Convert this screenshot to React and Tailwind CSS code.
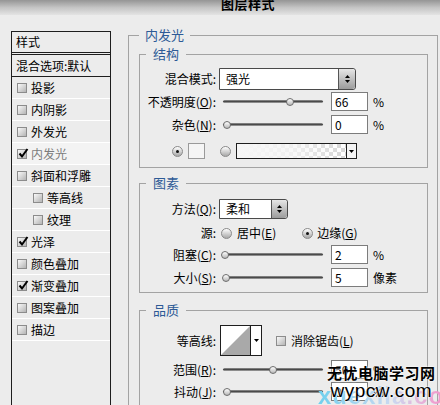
import React from 'react';

const effects = [
  { label: '投影' },
  { label: '内阴影' },
  { label: '外发光' },
  { label: '内发光', checked: true, active: true },
  { label: '斜面和浮雕' },
  { label: '等高线', indent: true },
  { label: '纹理', indent: true },
  { label: '光泽', checked: true },
  { label: '颜色叠加' },
  { label: '渐变叠加', checked: true },
  { label: '图案叠加' },
  { label: '描边' },
];

const Checkbox = ({ checked }) => (
  <div className="relative w-[10px] h-[10px] shrink-0 border border-[#8c8c8c] bg-gradient-to-br from-[#fafafa] to-[#b4b4b4]">
    {checked && (
      <svg className="absolute -top-[2px] left-0" width="11" height="11" viewBox="0 0 11 11">
        <path d="M1.5 5.5 L4 8.5 L9.5 1" fill="none" stroke="#000" strokeWidth="2" />
      </svg>
    )}
  </div>
);

const Radio = ({ checked }) => (
  <div className="w-[11px] h-[11px] shrink-0 rounded-full border border-[#8a8a8a] bg-gradient-to-b from-[#ffffff] to-[#a8a8a8] flex items-center justify-center">
    {checked && <div className="w-[3px] h-[3px] rounded-full bg-[#111]" />}
  </div>
);

const Slider = ({ value }) => (
  <div className="relative w-[100px] h-[8px] flex items-center shrink-0">
    <div className="w-full h-[3px] rounded-full bg-gradient-to-b from-[#9a9a9a] via-[#4a4a4a] to-[#b0b0b0]" />
    <div
      className="absolute top-0 w-[8px] h-[8px] rounded-full border border-[#6e6e6e] bg-gradient-to-b from-[#ffffff] to-[#b8b8b8]"
      style={{ left: `${value}%`, marginLeft: value === 0 ? 0 : -4 }}
    />
  </div>
);

const NumBox = ({ value }) => (
  <div className="w-[37px] h-[19px] shrink-0 border border-[#7c7c7c] bg-white pl-[3px] flex items-center text-[12px] leading-none">
    {value}
  </div>
);

const Stepper = ({ w = 17 }) => (
  <div className={`h-full ${w === 17 ? 'w-[17px]' : 'w-[16px]'} border-l border-[#555] rounded-r-[3px] bg-gradient-to-b from-[#e6e6e6] to-[#9c9c9c] flex flex-col items-center justify-center gap-[2px]`}>
    <svg width="5" height="3" viewBox="0 0 5 3"><path d="M0 3 L2.5 0 L5 3 Z" fill="#000" /></svg>
    <svg width="5" height="3" viewBox="0 0 5 3"><path d="M0 0 L2.5 3 L5 0 Z" fill="#000" /></svg>
  </div>
);

const Label = ({ children }) => (
  <div className="w-[71px] shrink-0 text-right pr-[1px] text-[12px] leading-none whitespace-nowrap">{children}</div>
);

const Group = ({ title, className, children }) => (
  <fieldset className={`border border-[#a3a3a3] pl-[6px] ${className}`}>
    <legend className="px-[7px] text-[13px] leading-[16px] text-[#2d5a96]">{title}</legend>
    {children}
  </fieldset>
);

const SliderRow = ({ label, value, num, unit = '%', className = '' }) => (
  <div className={`flex items-center h-[19px] ${className}`}>
    <Label>{label}</Label>
    <div className="ml-[6px]"><Slider value={value} /></div>
    <div className="ml-[8px]"><NumBox value={num} /></div>
    <span className="ml-[5px] text-[12px] leading-none">{unit}</span>
  </div>
);

export default function App() {
  return (
    <div className="relative w-[440px] h-[405px] overflow-hidden bg-[#ececec] text-black font-['Noto_Sans_CJK_SC','Liberation_Sans',sans-serif]">
      {/* title bar */}
      <div className="h-[15px] overflow-hidden bg-gradient-to-b from-[#959595] via-[#c4c4c4] to-[#e4e4e4] flex justify-center">
        <div className="ml-[56px] -mt-[3px] text-[13px] leading-none font-bold tracking-[0.5px]">图层样式</div>
      </div>

      <div className="flex items-start">
        {/* left list */}
        <div className="ml-[11px] mt-[16px] w-[100px] h-[420px] border border-[#1e1e1e] shrink-0">
          <div className="h-[23px] pl-[4px] pt-[3px] border-b-[3px] border-double border-[#1e1e1e] text-[12px] leading-[14px]">样式</div>
          <div className="h-[22px] pl-[4px] flex items-center border-b border-[#1e1e1e] text-[12px] leading-none whitespace-nowrap">混合选项:默认</div>
          {effects.map((e) => (
            <div
              key={e.label}
              className={`h-[22px] flex items-center border-b border-white text-[12px] leading-none ${e.indent ? 'pl-[21px]' : 'pl-[5px]'} ${e.active ? 'bg-[#f3f3f3] text-[#7c7c7c]' : ''}`}
            >
              <Checkbox checked={e.checked} />
              <span className="ml-[4px]">{e.label}</span>
            </div>
          ))}
        </div>

        {/* right panel */}
        <fieldset className="ml-[17px] mt-[12px] w-[310px] h-[420px] border border-[#a3a3a3] pl-[10px]">
          <legend className="px-[6px] text-[13px] leading-[16px] text-[#2d5a96]">内发光</legend>

          <Group title="结构" className="mt-[3px] w-[289px] pt-[6px] pb-[8px]">
            <div className="flex items-center h-[22px]">
              <Label>混合模式:</Label>
              <div className="ml-[2px] w-[137px] h-[22px] border border-[#4a4a4a] rounded-r-[3px] bg-white flex items-center">
                <span className="flex-1 pl-[6px] text-[12px] leading-none">强光</span>
                <Stepper />
              </div>
            </div>
            <SliderRow label={<>不透明度(<u>O</u>):</>} value={67} num="66" className="mt-[2px]" />
            <SliderRow label={<>杂色(<u>N</u>):</>} value={0} num="0" className="mt-[4px]" />
            <div className="flex items-center h-[16px] mt-[9px]">
              <div className="ml-[26px]"><Radio checked /></div>
              <div className="ml-[5px] w-[17px] h-[16px] border border-[#9a9a9a] bg-[#f5f5f5]" />
              <div className="ml-[15px]"><Radio /></div>
              <div className="ml-[5px] w-[121px] h-[16px] border border-[#1e1e1e] flex">
                <div className="flex-1 bg-[conic-gradient(#d6d6d6_25%,#ffffff_0_50%,#d6d6d6_0_75%,#ffffff_0)] bg-[length:8px_8px]">
                  <div className="w-full h-full bg-gradient-to-r from-[#f6f6f6] via-[#f6f6f6]/80 to-transparent" />
                </div>
                <div className="w-[10px] border-l border-[#1e1e1e] bg-[#f4f4f4] flex items-center justify-center">
                  <svg width="5" height="3" viewBox="0 0 5 3"><path d="M0 0 L2.5 3 L5 0 Z" fill="#000" /></svg>
                </div>
              </div>
            </div>
          </Group>

          <Group title="图素" className="mt-[7px] w-[289px] pt-[8px] pb-[5px]">
            <div className="flex items-center h-[20px]">
              <Label>方法(<u>Q</u>):</Label>
              <div className="ml-[2px] w-[69px] h-[20px] border border-[#4a4a4a] rounded-r-[3px] bg-white flex items-center">
                <span className="flex-1 pl-[6px] text-[12px] leading-none">柔和</span>
                <Stepper w={16} />
              </div>
            </div>
            <div className="flex items-center h-[16px] mt-[6px] text-[12px] leading-none">
              <Label>源:</Label>
              <div className="ml-[4px]"><Radio /></div>
              <span className="ml-[5px]">居中(<u>E</u>)</span>
              <div className="ml-[26px]"><Radio checked /></div>
              <span className="ml-[4px]">边缘(<u>G</u>)</span>
            </div>
            <SliderRow label={<>阻塞(<u>C</u>):</>} value={2} num="2" className="mt-[4px]" />
            <SliderRow label={<>大小(<u>S</u>):</>} value={3} num="5" unit="像素" className="mt-[4px]" />
          </Group>

          <Group title="品质" className="mt-[9px] w-[289px] pt-[7px] pb-[40px]">
            <div className="flex items-center h-[31px]">
              <Label>等高线:</Label>
              <div className="ml-[3px] w-[42px] h-[31px] border border-[#1e1e1e] bg-white flex">
                <svg width="29" height="29" viewBox="0 0 29 29" className="shrink-0">
                  <polygon points="0,29 29,0 29,29" fill="#a9a9a9" />
                </svg>
                <div className="flex-1 border-l border-[#1e1e1e] flex items-center justify-center">
                  <svg width="5" height="3" viewBox="0 0 5 3"><path d="M0 0 L2.5 3 L5 0 Z" fill="#000" /></svg>
                </div>
              </div>
              <div className="ml-[14px]"><Checkbox /></div>
              <span className="ml-[5px] text-[12px] leading-none">消除锯齿(<u>L</u>)</span>
            </div>
            <SliderRow label={<>范围(<u>R</u>):</>} value={50} num="50" className="mt-[4px]" />
            <SliderRow label={<>抖动(<u>J</u>):</>} value={0} num="0" className="mt-[3px]" />
          </Group>
        </fieldset>
      </div>

      {/* watermark */}
      <div className="absolute left-[318px] top-[384px] text-[24px] leading-none font-bold tracking-[1px] font-['Liberation_Sans',sans-serif] bg-gradient-to-r from-[#6fd0ee] via-[#c9d8f0] to-[#ff6fb8] bg-clip-text text-transparent">
        xuexila.com
      </div>
      <div className="absolute left-[327px] top-[364px] flex flex-col items-center">
        <div className="text-[15px] leading-[18px] font-bold tracking-[0.5px] [text-shadow:0_0_2px_#fff,0_0_2px_#fff]">无忧电脑学习网</div>
        <div className="text-[19px] leading-[18px] font-['Liberation_Sans',sans-serif] tracking-[0.5px] [text-shadow:0_0_2px_#fff,0_0_2px_#fff]">wypcw.com</div>
      </div>
    </div>
  );
}
